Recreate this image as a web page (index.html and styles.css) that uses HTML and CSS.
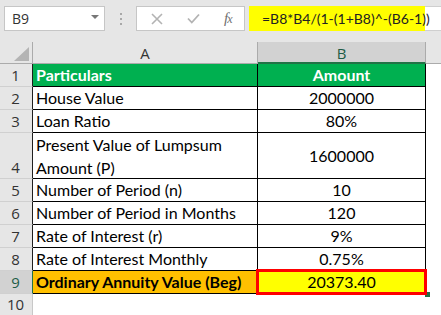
FILE: index.html
```html
<!DOCTYPE html>
<html>
<head>
<meta charset="utf-8">
<link rel="stylesheet" href="styles.css">
</head>
<body>
<div class="app">
  <div class="toolbar">
    <div class="namebox"><span class="nb-text">B9</span><span class="caret"></span></div>
    <div class="dots"><i></i><i></i><i></i></div>
    <div class="fxbox">
      <svg class="ico" width="12" height="12" viewBox="0 0 12 12"><path d="M1 1 L11 11 M11 1 L1 11" stroke="#b3b3b3" stroke-width="1.6" fill="none"/></svg>
      <svg class="ico" width="13" height="11" viewBox="0 0 13 11"><path d="M1 5.5 L4.8 9.5 L12 1.5" stroke="#b3b3b3" stroke-width="1.8" fill="none"/></svg>
      <span class="fx">f<span class="fx-x">x</span></span>
    </div>
    <div class="formula"><div class="ftext">=B8*B4/(1-(1+B8)^-(B6-1))</div></div>
  </div>
  <div class="sheet">
    <div class="corner"><span class="tri"></span></div>
    <div class="colhead">A</div>
    <div class="colhead sel">B</div>
    <div class="colhead fill"></div>

    <div class="rowhead">1</div>
    <div class="cell a green bold">Particulars</div>
    <div class="cell b green bold">Amount</div>
    <div class="blank"></div>

    <div class="rowhead">2</div>
    <div class="cell a">House Value</div>
    <div class="cell b">2000000</div>
    <div class="blank"></div>

    <div class="rowhead">3</div>
    <div class="cell a">Loan Ratio</div>
    <div class="cell b">80%</div>
    <div class="blank"></div>

    <div class="rowhead">4</div>
    <div class="cell a wrap">Present Value of Lumpsum<br>Amount (P)</div>
    <div class="cell b mid">1600000</div>
    <div class="blank"></div>

    <div class="rowhead">5</div>
    <div class="cell a">Number of Period (n)</div>
    <div class="cell b">10</div>
    <div class="blank"></div>

    <div class="rowhead">6</div>
    <div class="cell a">Number of Period in Months</div>
    <div class="cell b">120</div>
    <div class="blank"></div>

    <div class="rowhead">7</div>
    <div class="cell a">Rate of Interest (r)</div>
    <div class="cell b">9%</div>
    <div class="blank"></div>

    <div class="rowhead">8</div>
    <div class="cell a">Rate of Interest Monthly</div>
    <div class="cell b">0.75%</div>
    <div class="blank"></div>

    <div class="rowhead selrow">9</div>
    <div class="cell a orange bold">Ordinary Annuity Value (Beg)</div>
    <div class="cell b yellow active">20373.40<span class="handle"></span></div>
    <div class="blank"></div>

    <div class="rowhead last">10</div>
    <div class="empty"></div>
    <div class="empty"></div>
    <div class="blank"></div>
  </div>
</div>
</body>
</html>
```
FILE: styles.css
```css
* { box-sizing: border-box; }
html, body { margin: 0; padding: 0; }
body { width: 441px; height: 315px; overflow: hidden; background: #fff; }
.app { width: 441px; height: 315px; display: flex; flex-direction: column; }

.toolbar {
  height: 42px;
  background: #e6e6e6;
  display: flex;
  align-items: flex-start;
  padding-top: 6px;
  font-family: "Open Sans", "Noto Sans", sans-serif;
}
.namebox {
  margin-left: 4px;
  width: 101px;
  height: 25px;
  background: #fff;
  border: 1px solid #c6c6c6;
  display: flex;
  align-items: center;
  justify-content: space-between;
  padding: 0 5px 0 7px;
}
.nb-text { font-size: 14px; color: #333; }
.caret {
  width: 0; height: 0;
  border-left: 4px solid transparent;
  border-right: 4px solid transparent;
  border-top: 4px solid #777;
  margin-top: -4px;
}
.dots {
  width: 31px;
  height: 25px;
  display: flex;
  flex-direction: column;
  align-items: center;
  justify-content: center;
  gap: 3px;
}
.dots i { display: block; width: 2px; height: 2px; background: #a8a8a8; }
.fxbox {
  width: 109px;
  height: 25px;
  background: #fff;
  border: 1px solid #c6c6c6;
  display: flex;
  align-items: center;
  padding-left: 14px;
  gap: 0;
}
.ico { display: block; }
.ico + .ico { margin-left: 24px; }
.fx {
  margin-left: 24px;
  font-family: "Liberation Serif", serif;
  font-style: italic;
  font-size: 15px;
  color: #707070;
  letter-spacing: -1px;
}
.fx-x { font-size: 12px; }
.formula {
  flex: 1;
  margin-left: 4px;
  height: 25px;
  background: #fff;
  border-top: 1px solid #cfcfcf;
  border-bottom: 1px solid #cfcfcf;
  display: flex;
}
.ftext {
  width: 176px;
  height: 25px;
  margin-top: -1px;
  background: #ffff00;
  font-family: "Lato", "Open Sans", sans-serif;
  font-size: 14px;
  color: #222;
  line-height: 25px;
  padding-left: 13px;
  white-space: nowrap;
}

.sheet {
  flex: 1;
  display: grid;
  grid-template-columns: 33px 225px 168px 1fr;
  grid-template-rows: 22px 23px 23px 23px 46px 23px 23px 23px 23px 23px 1fr;
  font-family: "Lato", "Open Sans", sans-serif;
  font-size: 16px;
  color: #000;
}
.corner {
  background: #e6e6e6;
  border-right: 1px solid #ababab;
  border-bottom: 1px solid #ababab;
  position: relative;
}
.tri {
  position: absolute;
  right: 3px;
  bottom: 2px;
  width: 0; height: 0;
  border-left: 15px solid transparent;
  border-bottom: 14px solid #b4b4b4;
}
.colhead {
  background: #e6e6e6;
  border-right: 1px solid #ababab;
  border-bottom: 1px solid #ababab;
  display: flex;
  align-items: center;
  justify-content: center;
  font-family: "Open Sans", "Noto Sans", sans-serif;
  font-size: 15px;
  color: #333;
  padding-top: 1px;
}
.colhead.sel {
  background: #d2d2d2;
  border-bottom: 2px solid #217346;
  color: #1e5c47;
}
.colhead.fill { border-right: none; }
.rowhead {
  background: #e6e6e6;
  border-right: 1px solid #1f1f1f;
  border-bottom: 1px solid #d0d0d0;
  display: flex;
  align-items: flex-end;
  justify-content: center;
  font-family: "Open Sans", "Noto Sans", sans-serif;
  font-size: 15px;
  line-height: 20px;
  color: #333;
  padding-bottom: 1px;
  padding-right: 1px;
}
.rowhead.selrow {
  background: #d2d2d2;
  border-right: 1px solid #217346;
  color: #1e5c47;
}
.rowhead.last { border-right-color: #c8c8c8; border-bottom: none; }
.cell {
  border-right: 1px solid #000;
  border-bottom: 1px solid #000;
  display: flex;
  align-items: flex-end;
  line-height: 20px;
  padding-bottom: 1px;
  white-space: nowrap;
}
.cell.a { padding-left: 3px; }
.cell.b { justify-content: center; }
.cell.wrap {
  white-space: normal;
  align-items: center;
  line-height: 23px;
  padding-bottom: 0;
}
.cell.mid { align-items: center; padding-bottom: 0; }
.green { background: #00b050; color: #fff; }
.bold { font-weight: 700; }
.orange { background: #ffc000; }
.yellow { background: #ffff00; }
.active { position: relative; }
.active::after {
  content: "";
  position: absolute;
  left: -2px; top: -2px; right: -2px; bottom: -2px;
  border: 3px solid #ff0000;
}
.handle {
  position: absolute;
  right: -5px;
  bottom: -4px;
  width: 5px;
  height: 5px;
  background: #217346;
}
.blank { background: #fff; }
.empty { background: #fff; }
```
